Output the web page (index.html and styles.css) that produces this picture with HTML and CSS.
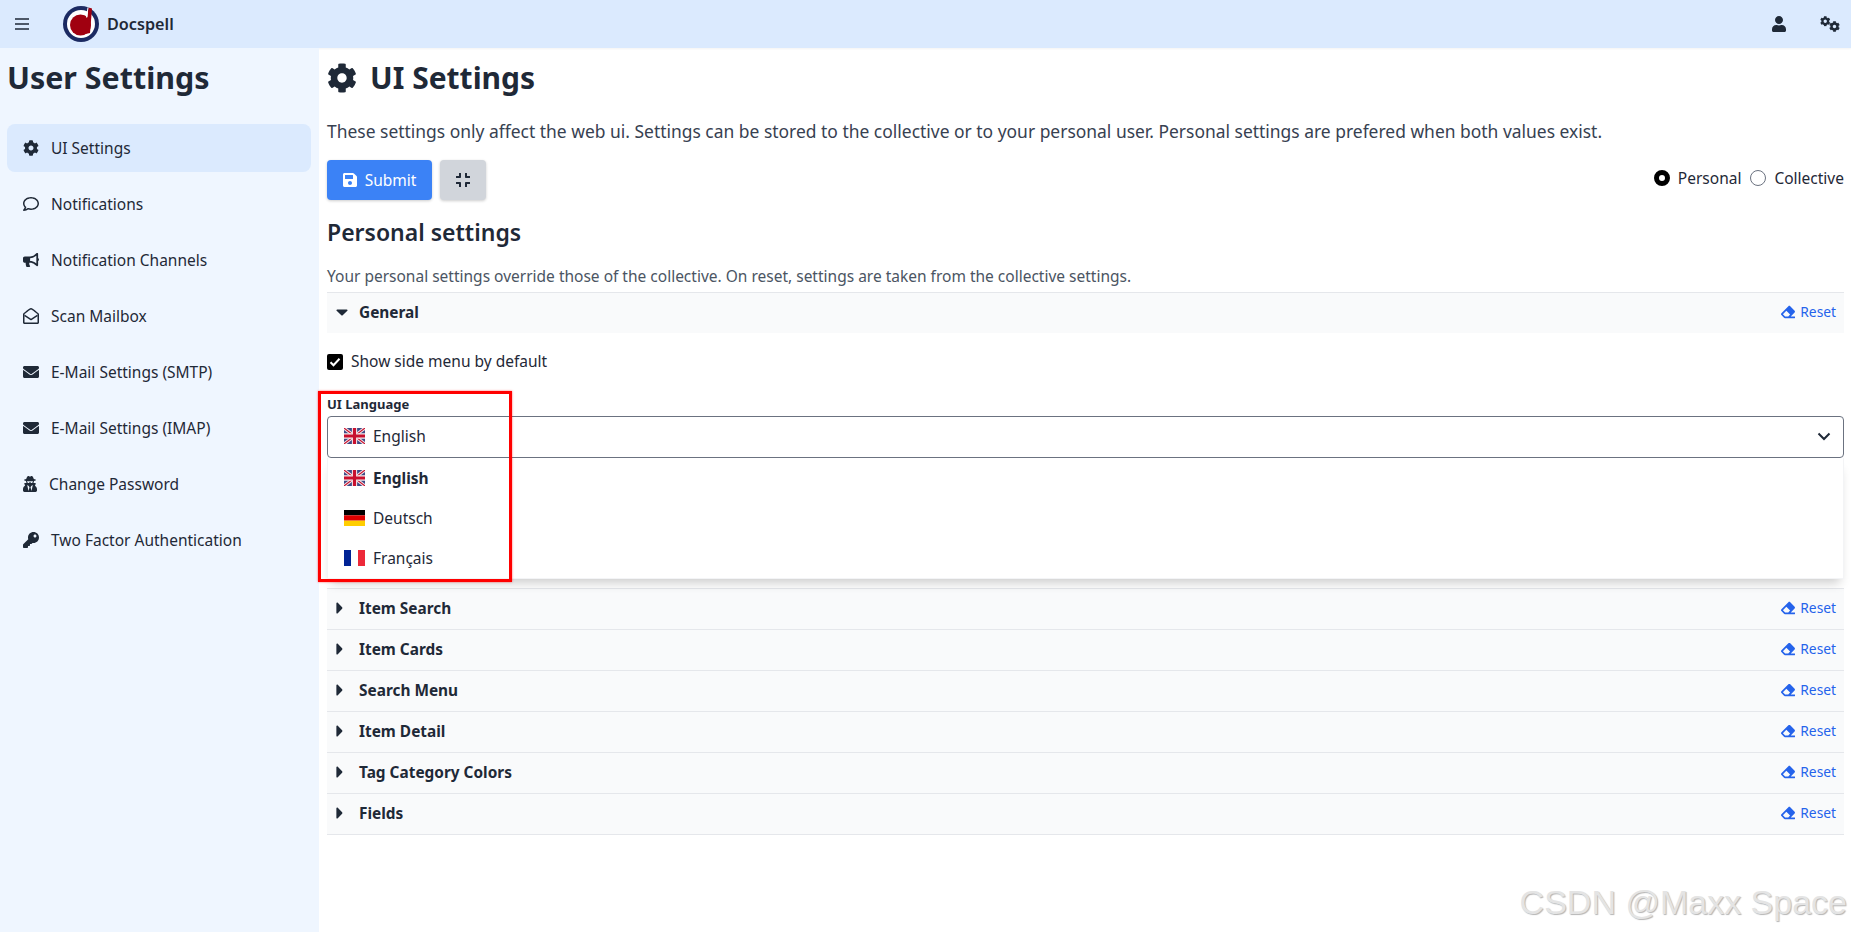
FILE: index.html
```html
<!DOCTYPE html>
<html lang="en">
<head>
  <meta charset="UTF-8">
  <meta name="viewport" content="width=device-width, initial-scale=1.0">
  <link rel="stylesheet" href="styles.css">
  <title>Docspell</title>
</head>
<body>
  <svg class="sprites" xmlns="http://www.w3.org/2000/svg">
    <symbol id="i-gear" viewBox="0 0 512 512"><path d="M487.4 315.7l-42.6-24.6c4.3-23.2 4.3-47 0-70.2l42.6-24.6c4.9-2.8 7.1-8.6 5.5-14-11.1-35.6-30-67.8-54.7-94.6-3.8-4.1-10-5.1-14.8-2.3L380.8 110c-17.9-15.4-38.5-27.3-60.8-35.1V25.8c0-5.6-3.9-10.5-9.4-11.7-36.7-8.2-74.3-7.8-109.2 0-5.5 1.2-9.4 6.1-9.4 11.7V75c-22.2 7.9-42.8 19.8-60.8 35.1L88.7 85.5c-4.9-2.8-11-1.9-14.8 2.3-24.7 26.7-43.6 58.9-54.7 94.6-1.7 5.4.6 11.2 5.5 14L67.3 221c-4.3 23.2-4.3 47 0 70.2l-42.6 24.6c-4.9 2.8-7.1 8.6-5.5 14 11.1 35.6 30 67.8 54.7 94.6 3.8 4.1 10 5.1 14.8 2.3l42.6-24.6c17.9 15.4 38.5 27.3 60.8 35.1v49.2c0 5.6 3.9 10.5 9.4 11.7 36.7 8.2 74.3 7.8 109.2 0 5.5-1.2 9.4-6.1 9.4-11.7v-49.2c22.2-7.9 42.8-19.8 60.8-35.1l42.6 24.6c4.9 2.8 11 1.9 14.8-2.3 24.7-26.7 43.6-58.9 54.7-94.6 1.5-5.5-.7-11.3-5.6-14.1zM256 336c-44.1 0-80-35.9-80-80s35.9-80 80-80 80 35.9 80 80-35.9 80-80 80z"/></symbol>
    <symbol id="i-envelope" viewBox="0 0 512 512"><path d="M502.3 190.8c3.9-3.1 9.7-.2 9.7 4.7V400c0 26.5-21.5 48-48 48H48c-26.5 0-48-21.5-48-48V195.6c0-5 5.7-7.8 9.7-4.7 22.4 17.4 52.1 39.5 154.1 113.6 21.1 15.4 56.7 47.8 92.2 47.6 35.7.3 72-32.8 92.3-47.6 102-74.1 131.6-96.3 154-113.7zM256 320c23.2.4 56.6-29.2 73.4-41.4 132.7-96.3 142.8-104.7 173.4-128.7 5.8-4.5 9.2-11.5 9.2-18.9v-19c0-26.5-21.5-48-48-48H48C21.5 64 0 85.5 0 112v19c0 7.4 3.4 14.3 9.2 18.9 30.6 23.9 40.7 32.4 173.4 128.7 16.8 12.2 50.2 41.800 73.4 41.400z"/></symbol>
    <symbol id="i-eraser" viewBox="0 0 512 512"><path d="M497.941 273.941c18.745-18.745 18.745-49.137 0-67.882l-160-160c-18.745-18.745-49.136-18.746-67.883 0l-256 256c-18.745 18.745-18.745 49.137 0 67.882l96 96A48.004 48.004 0 0 0 144 480h356c6.627 0 12-5.373 12-12v-40c0-6.627-5.373-12-12-12H355.883l142.058-142.059zm-302.627-62.627l137.373 137.373L265.373 416H150.628l-80-80 124.686-124.686z"/></symbol>
    <symbol id="i-right" viewBox="0 0 10 16"><path d="M2 2.600c0-.9 1-1.300 1.600-.7l5 5.300c.4.400.4 1.200 0 1.600l-5 5.300c-.6.600-1.600.2-1.600-.7z"/></symbol>
    <symbol id="i-down" viewBox="0 0 16 10"><path d="M2.600 1.500h10.800c.9 0 1.300 1 .7 1.600l-5.300 5c-.4.400-1.200.4-1.600 0l-5.300-5c-.6-.6-.2-1.600.7-1.600z"/></symbol>
    <symbol id="f-uk" viewBox="0 0 60 45" preserveAspectRatio="none">
      <rect width="60" height="45" fill="#3d4a86"/>
      <path d="M0 0L60 45M60 0L0 45" stroke="#f3e4e6" stroke-width="9"/>
      <path d="M0 0L60 45M60 0L0 45" stroke="#c8102e" stroke-width="3"/>
      <path d="M30 0V45M0 22.500H60" stroke="#f6eaec" stroke-width="15"/>
      <path d="M30 0V45M0 22.500H60" stroke="#c8102e" stroke-width="9"/>
    </symbol>
    <symbol id="f-de" viewBox="0 0 3 3" preserveAspectRatio="none">
      <rect width="3" height="1" fill="#000"/>
      <rect y="1" width="3" height="1" fill="#d00"/>
      <rect y="2" width="3" height="1" fill="#ffce00"/>
    </symbol>
    <symbol id="f-fr" viewBox="0 0 3 3" preserveAspectRatio="none">
      <rect width="1" height="3" fill="#002395"/>
      <rect x="1" width="1" height="3" fill="#fff"/>
      <rect x="2" width="1" height="3" fill="#ed2939"/>
    </symbol>
  </svg>

  <header class="topbar">
    <svg class="burger" viewBox="0 0 14 12"><path d="M0 1h14M0 6h14M0 11h14" stroke="currentColor" stroke-width="1.600" stroke-linecap="round"/></svg>
    <svg class="logo" viewBox="0 0 36 36">
      <circle cx="18" cy="18" r="18" fill="#1b2a62"/>
      <circle cx="18" cy="18" r="14" fill="#fff"/>
      <circle cx="17.500" cy="19" r="10.500" fill="#a00010"/>
      <path d="M25.500 1.500L29 2.500L27 27L22.500 28z" fill="#a00010"/>
      <path d="M24.500 1.500L25.500 1.500L24 12L23 11z" fill="#fff"/>
    </svg>
    <span class="brand">Docspell</span>
    <svg class="top-icon user-icon" viewBox="0 0 448 512"><path d="M224 256c70.700 0 128-57.300 128-128S294.700 0 224 0 96 57.300 96 128s57.300 128 128 128zm89.600 32h-16.700c-22.200 10.200-46.900 16-72.900 16s-50.600-5.800-72.900-16h-16.700C60.200 288 0 348.200 0 422.400V464c0 26.500 21.500 48 48 48h352c26.500 0 48-21.500 48-48v-41.600c0-74.200-60.200-134.400-134.400-134.400z"/></svg>
    <svg class="top-icon cogs-icon" viewBox="0 0 20 16">
      <use href="#i-gear" x="0" y="0" width="10.500" height="10.500"/>
      <use href="#i-gear" x="9" y="5" width="11" height="11"/>
    </svg>
  </header>

  <div class="layout">
    <aside class="sidebar">
      <h2 class="side-title">User Settings</h2>
      <nav class="side-nav">
        <a class="side-item active"><svg class="side-icon"><use href="#i-gear"/></svg>UI Settings</a>
        <a class="side-item"><svg class="side-icon" viewBox="0 0 512 512"><path d="M256 32C114.600 32 0 125.100 0 240c0 47.600 19.900 91.200 52.900 126.300C38 405.700 7 439.100 6.500 439.500c-6.600 7-8.400 17.200-4.600 26S14.400 480 24 480c61.500 0 110-25.700 139.100-46.300C192 442.800 223.200 448 256 448c141.400 0 256-93.100 256-208S397.400 32 256 32zm0 368c-26.700 0-53.100-4.100-78.400-12.100l-22.700-7.200-19.500 13.800c-14.300 10.100-33.900 21.400-57.500 29 7.300-12.100 14.400-25.700 19.900-40.200l10.600-28.100-20.600-21.800C69.700 314.100 48 282.200 48 240c0-88.200 93.300-160 208-160s208 71.800 208 160-93.300 160-208 160z"/></svg>Notifications</a>
        <a class="side-item"><svg class="side-icon" viewBox="0 0 576 512"><path d="M576 240c0-23.630-12.950-44.040-32-55.120V32.010C544 23.260 537.020 0 512 0c-7.120 0-14.190 2.380-19.980 7.020l-85.030 68.030C364.280 109.090 310.660 128 256 128H64c-35.350 0-64 28.650-64 64v96c0 35.350 28.650 64 64 64h33.700c-1.390 10.480-2.180 21.140-2.180 32 0 39.770 9.260 77.350 25.560 110.950 5.190 10.690 16.520 17.050 28.400 17.050h74.280c26.050 0 41.690-29.840 25.900-50.560-16.400-21.520-26.150-48.360-26.150-77.440 0-11.110 1.620-21.790 4.410-32H256c54.660 0 108.280 18.910 150.980 52.950l85.030 68.030a32.023 32.023 0 0 0 19.980 7.020c24.920 0 32-22.780 32-32V295.130C563.050 284.040 576 263.630 576 240zm-96 141.420l-33.050-26.440C392.950 311.780 325.120 288 256 288v-96c69.120 0 136.950-23.780 190.950-66.980L480 98.580v282.840z"/></svg>Notification Channels</a>
        <a class="side-item"><svg class="side-icon" viewBox="0 0 512 512"><path d="M494.586 164.516c-4.697-3.883-111.723-89.558-136.193-109.014C333.440 35.480 296.020 0 256 0c-39.800 0-76.871 35.166-102.393 55.502-25.440 20.225-131.482 105.159-136.193 109.014A48 48 0 0 0 0 201.587V464c0 26.510 21.490 48 48 48h416c26.510 0 48-21.490 48-48V201.587a48 48 0 0 0-17.414-37.071zM464 458a6 6 0 0 1-6 6H54a6 6 0 0 1-6-6V203.460c0-1.840.83-3.576 2.276-4.690 14.700-12.107 114.195-91.696 133.710-107.176C204.740 75.107 231.816 48 256 48c24.300 0 51.900 27.500 72.014 43.594 19.400 15.436 119.060 95.132 133.710 107.176a6 6 0 0 1 2.276 4.690V458z"/><path d="M50 235L256 370L462 235" fill="none" stroke="currentColor" stroke-width="46" stroke-linejoin="round"/></svg>Scan Mailbox</a>
        <a class="side-item"><svg class="side-icon"><use href="#i-envelope"/></svg>E-Mail Settings (SMTP)</a>
        <a class="side-item"><svg class="side-icon"><use href="#i-envelope"/></svg>E-Mail Settings (IMAP)</a>
        <a class="side-item"><svg class="side-icon narrow" viewBox="0 0 448 512"><path d="M383.900 308.300l23.900-62.600c4-10.500-3.700-21.700-15-21.700h-58.500c11-18.900 17.800-40.600 17.800-64v-.3c39.200-7.800 64-19.100 64-31.700 0-13.300-27.300-25.100-70.100-33-9.200-32.800-27-65.800-40.600-82.800-9.500-11.900-25.900-15.600-39.500-8.800l-27.600 13.800c-9 4.500-19.600 4.500-28.600 0L182.100 3.400c-13.600-6.800-30-3.100-39.500 8.800-13.500 17-31.400 50-40.600 82.800-42.700 7.900-70 19.700-70 33 0 12.600 24.800 23.900 64 31.700v.3c0 23.400 6.800 45.100 17.800 64H56.300c-11.500 0-19.200 11.700-14.700 22.300l25.800 60.200C27.300 329.800 0 372.700 0 422.400v44.800C0 491.900 20.100 512 44.800 512h358.400c24.700 0 44.800-20.100 44.800-44.800v-44.800c0-48.400-25.800-90.400-64.100-114.100zM176 480l-41.600-192 49.600 32 24 40-32 120zm96 0l-32-120 24-40 49.600-32L272 480zm41.700-298.500c-3.900 11.900-7 24.600-16.500 33.400-10.100 9.300-48 22.400-64-25-2.800-8.400-15.400-8.400-18.300 0-17 50.200-56 32.400-64 25-9.500-8.800-12.700-21.500-16.500-33.400-.8-2.500-6.300-5.700-6.300-5.800v-10.800c28.300 3.600 61 5.800 96 5.800s67.700-2.100 96-5.800v10.800c-.1.100-5.600 3.200-6.400 5.800z"/></svg>Change Password</a>
        <a class="side-item"><svg class="side-icon" viewBox="0 0 512 512"><path d="M512 176.001C512 273.203 433.202 352 336 352c-11.220 0-22.190-1.062-32.827-3.069l-24.012 27.014A23.999 23.999 0 0 1 261.223 384H224v40c0 13.255-10.745 24-24 24h-40v40c0 13.255-10.745 24-24 24H24c-13.255 0-24-10.745-24-24v-78.059c0-6.365 2.529-12.470 7.029-16.971l161.802-161.802C163.108 213.814 160 195.271 160 176 160 78.798 238.797.001 335.999 0 433.488-.001 512 78.511 512 176.001zM336 128c0 26.510 21.490 48 48 48s48-21.490 48-48-21.490-48-48-48-48 21.490-48 48z"/></svg>Two Factor Authentication</a>
      </nav>
    </aside>

    <main class="content">
      <h1 class="page-title"><svg class="title-icon"><use href="#i-gear"/></svg>UI Settings</h1>
      <p class="intro">These settings only affect the web ui. Settings can be stored to the collective or to your personal user. Personal settings are prefered when both values exist.</p>

      <div class="actions">
        <button class="btn btn-primary">
          <svg class="btn-icon" viewBox="0 0 448 512"><path d="M433.941 129.941l-83.882-83.882A48 48 0 0 0 316.118 32H48C21.490 32 0 53.490 0 80v352c0 26.510 21.490 48 48 48h352c26.510 0 48-21.490 48-48V163.882a48 48 0 0 0-14.059-33.941zM224 416c-35.346 0-64-28.654-64-64 0-35.346 28.654-64 64-64s64 28.654 64 64c0 35.346-28.654 64-64 64zm96-304.520V212c0 6.627-5.373 12-12 12H76c-6.627 0-12-5.373-12-12V108c0-6.627 5.373-12 12-12h228.520c3.183 0 6.235 1.264 8.485 3.515l3.480 3.480A11.996 11.996 0 0 1 320 111.480z"/></svg>
          Submit
        </button>
        <button class="btn btn-gray">
          <svg class="btn-icon" viewBox="0 0 448 512"><path d="M436 192H312c-13.300 0-24-10.700-24-24V44c0-6.600 5.400-12 12-12h40c6.600 0 12 5.400 12 12v84h84c6.600 0 12 5.400 12 12v40c0 6.600-5.400 12-12 12zm-276-24V44c0-6.600-5.400-12-12-12h-40c-6.600 0-12 5.400-12 12v84H12c-6.600 0-12 5.400-12 12v40c0 6.600 5.400 12 12 12h124c13.300 0 24-10.700 24-24zm0 300V344c0-13.300-10.700-24-24-24H12c-6.600 0-12 5.400-12 12v40c0 6.600 5.400 12 12 12h84v84c0 6.600 5.400 12 12 12h40c6.600 0 12-5.400 12-12zm192 0v-84h84c6.600 0 12-5.400 12-12v-40c0-6.600-5.400-12-12-12H312c-13.300 0-24 10.700-24 24v124c0 6.600 5.400 12 12 12h40c6.600 0 12-5.400 12-12z"/></svg>
        </button>
        <div class="scope">
          <span class="radio checked"></span><span class="scope-label">Personal</span>
          <span class="radio"></span><span class="scope-label">Collective</span>
        </div>
      </div>

      <h2 class="section-title">Personal settings</h2>
      <p class="section-note">Your personal settings override those of the collective. On reset, settings are taken from the collective settings.</p>

      <div class="acc-head">
        <svg class="caret-down"><use href="#i-down"/></svg>
        <span class="acc-title">General</span>
        <a class="reset"><svg class="reset-icon"><use href="#i-eraser"/></svg>Reset</a>
      </div>
      <label class="check-row">
        <span class="checkbox"><svg viewBox="0 0 16 16"><path d="M3.500 8.200l3 3 6-6.400" fill="none" stroke="#fff" stroke-width="2"/></svg></span>
        Show side menu by default
      </label>

      <div class="lang-field">
        <div class="field-label">UI Language</div>
        <div class="select">
          <svg class="flag"><use href="#f-uk"/></svg>English
          <svg class="chevron" viewBox="0 0 14 9"><path d="M1.500 1.500L7 7l5.500-5.500" fill="none" stroke="currentColor" stroke-width="2"/></svg>
        </div>
        <ul class="menu">
          <li class="menu-item current"><svg class="flag"><use href="#f-uk"/></svg>English</li>
          <li class="menu-item"><svg class="flag"><use href="#f-de"/></svg>Deutsch</li>
          <li class="menu-item"><svg class="flag"><use href="#f-fr"/></svg>Français</li>
        </ul>
        <div class="annotation"></div>
      </div>

      <div class="acc-head"><svg class="caret-right"><use href="#i-right"/></svg><span class="acc-title">Item Search</span><a class="reset"><svg class="reset-icon"><use href="#i-eraser"/></svg>Reset</a></div>
      <div class="acc-head"><svg class="caret-right"><use href="#i-right"/></svg><span class="acc-title">Item Cards</span><a class="reset"><svg class="reset-icon"><use href="#i-eraser"/></svg>Reset</a></div>
      <div class="acc-head"><svg class="caret-right"><use href="#i-right"/></svg><span class="acc-title">Search Menu</span><a class="reset"><svg class="reset-icon"><use href="#i-eraser"/></svg>Reset</a></div>
      <div class="acc-head"><svg class="caret-right"><use href="#i-right"/></svg><span class="acc-title">Item Detail</span><a class="reset"><svg class="reset-icon"><use href="#i-eraser"/></svg>Reset</a></div>
      <div class="acc-head"><svg class="caret-right"><use href="#i-right"/></svg><span class="acc-title">Tag Category Colors</span><a class="reset"><svg class="reset-icon"><use href="#i-eraser"/></svg>Reset</a></div>
      <div class="acc-head last"><svg class="caret-right"><use href="#i-right"/></svg><span class="acc-title">Fields</span><a class="reset"><svg class="reset-icon"><use href="#i-eraser"/></svg>Reset</a></div>
    </main>
  </div>

  <div class="watermark">CSDN @Maxx Space</div>
</body>
</html>
```

FILE: styles.css
```css
*, *::before, *::after {
  margin: 0;
  padding: 0;
  box-sizing: border-box;
}

body {
  position: relative;
  height: 932px;
  overflow: hidden;
  font-family: "Noto Sans", sans-serif;
  font-size: 15.5px;
  color: #1f2937;
  background: #fff;
}

svg {
  fill: currentColor;
}

.sprites {
  display: none;
}

/* top bar */
.topbar {
  display: flex;
  align-items: center;
  height: 48px;
  background: #dbeafe;
  box-shadow: 0 1px 2px rgba(0, 0, 0, .05);
}

.burger {
  width: 14px;
  height: 12px;
  margin-left: 15px;
}

.logo {
  width: 36px;
  height: 36px;
  margin-left: 34px;
}

.brand {
  margin-left: 8px;
  font-weight: 600;
  font-size: 16.2px;
}

.top-icon {
  height: 16px;
}

.user-icon {
  width: 14px;
  margin-left: auto;
}

.cogs-icon {
  width: 20px;
  margin-left: 34px;
  margin-right: 11px;
}

/* layout */
.layout {
  display: flex;
  height: 884px;
}

.sidebar {
  flex: 0 0 319px;
  padding: 12px 8px 0 7px;
  background: #eff6ff;
}

.side-title {
  font-size: 30.4px;
  line-height: 36px;
  font-weight: 700;
  margin-bottom: 28px;
}

.side-nav {
  display: flex;
  flex-direction: column;
  row-gap: 8px;
}

.side-item {
  display: flex;
  align-items: center;
  height: 48px;
  padding-left: 16px;
  border-radius: 8px;
}

.side-item.active {
  background: #dbeafe;
}

.side-icon {
  width: 16px;
  height: 16px;
  margin-right: 12px;
}

.side-icon.narrow {
  width: 14px;
}

.content {
  flex: 1;
  padding: 12px 7px 0 8px;
}

.page-title {
  display: flex;
  align-items: center;
  font-size: 30px;
  line-height: 36px;
  font-weight: 700;
}

.title-icon {
  width: 30px;
  height: 30px;
  margin-right: 13px;
}

.intro {
  margin-top: 23px;
  font-size: 17.45px;
  line-height: 24px;
  color: #374151;
}

/* buttons */
.actions {
  display: flex;
  align-items: flex-start;
  margin-top: 17px;
}

.btn {
  display: flex;
  align-items: center;
  justify-content: center;
  height: 40px;
  border: 0;
  border-radius: 4px;
  font: inherit;
  box-shadow: 0 1px 3px rgba(0, 0, 0, .2);
}

.btn-primary {
  width: 105px;
  color: #fff;
  background: #3b82f6;
}

.btn-gray {
  width: 46px;
  margin-left: 8px;
  color: #1f2937;
  background: #d1d5db;
}

.btn-icon {
  width: 14px;
  height: 16px;
}

.btn-primary .btn-icon {
  margin-right: 8px;
}

.scope {
  display: flex;
  align-items: center;
  margin-left: auto;
  height: 36px;
}

.radio {
  width: 16px;
  height: 16px;
  border: 1px solid #6b7280;
  border-radius: 50%;
  background: #fff;
}

.radio.checked {
  border: 5px solid #000;
}

.scope-label {
  margin-left: 8px;
  margin-right: 9px;
}

.scope-label:last-child {
  margin-right: 0;
}

.section-title {
  margin-top: 16px;
  font-size: 23px;
  line-height: 32px;
  font-weight: 600;
}

.section-note {
  margin-top: 18px;
  font-size: 15.5px;
  line-height: 20px;
  color: #4b5563;
}

/* accordion rows */
.acc-head {
  display: flex;
  align-items: center;
  height: 41px;
  padding: 0 8px 2px 7px;
  border-top: 1px solid #e5e7eb;
  background: #f9fafb;
}

.section-note + .acc-head {
  margin-top: 6px;
}

.acc-head.last {
  height: 42px;
  border-bottom: 1px solid #e5e7eb;
}

.caret-down {
  width: 14px;
  height: 9px;
  margin-left: 1px;
  margin-right: 1px;
}

.caret-right {
  width: 10px;
  height: 14px;
  margin-right: 6px;
}

.acc-title {
  margin-left: 9px;
  font-weight: 700;
  font-size: 15.4px;
}

.reset {
  display: flex;
  align-items: center;
  margin-left: auto;
  margin-bottom: 1px;
  font-size: 13.8px;
  color: #2563eb;
}

.reset-icon {
  width: 14px;
  height: 14px;
  margin-right: 5px;
}

.check-row {
  display: flex;
  align-items: center;
  margin-top: 20px;
  line-height: 17px;
}

.checkbox {
  display: block;
  width: 16px;
  height: 16px;
  margin-right: 8px;
  background: #000;
  border-radius: 2px;
}

.checkbox svg {
  display: block;
}

/* language select */
.lang-field {
  position: relative;
  margin-top: 26px;
  margin-bottom: 130px;
}

.field-label {
  font-size: 13px;
  line-height: 16px;
  font-weight: 700;
  margin-bottom: 4px;
}

.select {
  display: flex;
  align-items: center;
  height: 42px;
  padding: 0 12px 2px 16px;
  border: 1px solid #6b7280;
  border-radius: 4px;
}

.flag {
  width: 21px;
  height: 16px;
  margin-right: 8px;
}

.chevron {
  width: 14px;
  height: 9px;
  margin-left: auto;
}

.menu {
  position: absolute;
  top: 62px;
  left: 0;
  right: 0;
  list-style: none;
  background: #fff;
  border: 1px solid #f3f4f6;
  border-top: 0;
  box-shadow: 0 8px 10px -4px rgba(0, 0, 0, .2);
}

.menu-item {
  display: flex;
  align-items: center;
  height: 40px;
  padding-left: 16px;
}

.menu-item.current {
  font-weight: 700;
}

.annotation {
  position: absolute;
  top: -5px;
  left: -9px;
  width: 194px;
  height: 191px;
  border: 3px solid #f00;
  box-shadow: 0 0 2px rgba(255, 0, 0, .6);
}

.watermark {
  position: absolute;
  right: 4px;
  bottom: 10px;
  font-family: "Liberation Sans", sans-serif;
  font-size: 34px;
  color: #e4e4e4;
  text-shadow: 1px 1px 1px #b5b5b5;
}
```
